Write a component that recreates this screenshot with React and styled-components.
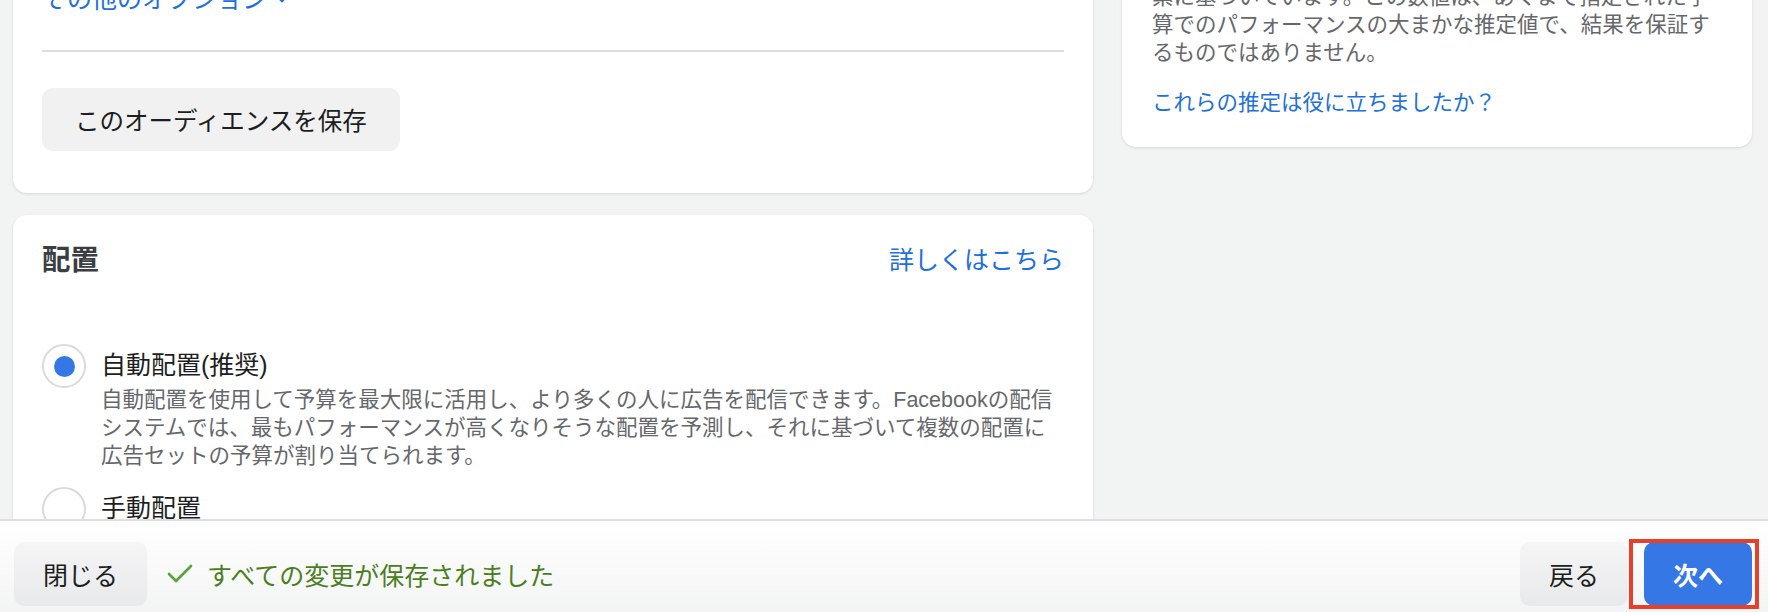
import styled, { createGlobalStyle } from "styled-components";

const GlobalStyle = createGlobalStyle`
  html, body {
    margin: 0;
    padding: 0;
  }
  body {
    background: #f2f3f3;
    font-family: "Liberation Sans", "Noto Sans CJK JP", sans-serif;
    color: #1c1e21;
    overflow: hidden;
  }
`;

const Page = styled.div`
  height: 612px;
  display: flex;
  flex-direction: column;
`;

const Main = styled.main`
  flex: 1;
  min-height: 0;
  overflow: hidden;
`;

// the view is scrolled: the top of both columns sits above the window
const Columns = styled.div`
  display: grid;
  grid-template-columns: 1080px 1fr;
  column-gap: 29px;
  align-items: start;
  padding: 0 16px 0 13px;
  margin-top: -46px;
`;

const Column = styled.div`
  display: flex;
  flex-direction: column;
  gap: 22px;
`;

const Card = styled.section`
  background: #fff;
  border-radius: 14px;
  box-shadow: 0 1px 3px rgba(0, 0, 0, 0.12);
  padding: ${(p) => p.$pad || "29px"};
`;

const MoreLink = styled.a`
  display: inline-flex;
  align-items: center;
  gap: 8px;
  font-size: 25px;
  line-height: 32px;
  color: #216fdb;
  text-decoration: none;
`;

const Divider = styled.hr`
  border: none;
  height: 2px;
  background: #dadde1;
  margin: 35px 0 36px;
`;

const SaveButton = styled.button`
  height: 63px;
  padding: 0 33px;
  border: none;
  border-radius: 11px;
  background: #f1f1f2;
  font-family: inherit;
  font-size: 24.5px;
  color: #1c1e21;
`;

const CardHeader = styled.div`
  display: flex;
  justify-content: space-between;
  align-items: center;
`;

const Heading = styled.h2`
  margin: 0;
  font-size: 28.5px;
  line-height: 36px;
  font-weight: 700;
  color: #3a3d41;
`;

const LearnLink = styled.a`
  font-size: 25px;
  line-height: 32px;
  color: #216fdb;
  text-decoration: none;
`;

const OptionList = styled.div`
  margin-top: 66px;
  display: flex;
  flex-direction: column;
  gap: 17px;
`;

const Option = styled.label`
  display: flex;
  align-items: flex-start;
  gap: 15px;
`;

const Radio = styled.span`
  flex: none;
  width: 44px;
  height: 44px;
  box-sizing: border-box;
  border-radius: 50%;
  border: 2px solid #d8dadd;
  background: #fff;
  display: flex;
  align-items: center;
  justify-content: center;

  &::after {
    content: "";
    width: 21px;
    height: 21px;
    border-radius: 50%;
    background: ${(p) => (p.$checked ? "#3578e5" : "transparent")};
  }
`;

const OptionText = styled.div`
  display: flex;
  flex-direction: column;
`;

const OptionLabel = styled.span`
  font-size: 25px;
  line-height: 42px;
  color: #1c1e21;
`;

const OptionDesc = styled.p`
  margin: 0;
  font-size: 21.5px;
  line-height: 28px;
  color: #65676b;
  white-space: nowrap;
`;

const EstimateText = styled.p`
  margin: 0;
  font-size: 21.5px;
  line-height: 28px;
  color: #65676b;
  white-space: nowrap;
`;

const HelpLink = styled.a`
  display: block;
  margin-top: 22px;
  font-size: 21.5px;
  line-height: 28px;
  color: #216fdb;
  text-decoration: none;
`;

const Footer = styled.footer`
  flex: none;
  height: 93px;
  box-sizing: border-box;
  border-top: 2px solid #dddfe2;
  background: linear-gradient(#ffffff, #f3f4f4);
  display: flex;
  justify-content: space-between;
  align-items: flex-start;
  padding: 21px 16px 0 14px;
`;

const FooterGroup = styled.div`
  display: flex;
  align-items: center;
  gap: ${(p) => p.$gap || "16px"};
`;

const FooterButton = styled.button`
  height: 64px;
  padding: 0 29px;
  border: none;
  border-radius: 10px;
  font-family: inherit;
  font-size: 25px;
  font-weight: ${(p) => (p.$primary ? 700 : 400)};
  color: ${(p) => (p.$primary ? "#fff" : "#1c1e21")};
  background: ${(p) =>
    p.$primary ? "#3578e5" : "linear-gradient(#f5f5f6, #e8e9ea)"};
`;

const Status = styled.div`
  display: flex;
  align-items: center;
  gap: 14px;
  font-size: 25px;
  color: #4b7e1f;
`;

// red annotation frame drawn over the "next" button
const Highlight = styled.span`
  position: relative;
  display: inline-flex;

  &::after {
    content: "";
    position: absolute;
    top: -3px;
    bottom: -3px;
    left: -15px;
    right: -7px;
    border: 4.5px solid #e6402b;
    pointer-events: none;
  }
`;

const Check = () => (
  <svg width="26" height="20" viewBox="0 0 26 20">
    <polyline
      points="2,10 9,17 24,2"
      fill="none"
      stroke="#5ba338"
      strokeWidth="2.6"
      strokeLinecap="round"
      strokeLinejoin="round"
    />
  </svg>
);

const Caret = () => (
  <svg width="14" height="10" viewBox="0 0 14 10">
    <path d="M2 2 L7 7 L12 2" fill="none" stroke="#216fdb" strokeWidth="2.4" />
  </svg>
);

export default function App() {
  return (
    <>
      <GlobalStyle />
      <Page>
        <Main>
          <Columns>
            <Column>
              <Card $pad="29px 29px 42px">
                <MoreLink href="#">
                  その他のオプション
                  <Caret />
                </MoreLink>
                <Divider />
                <SaveButton>このオーディエンスを保存</SaveButton>
              </Card>
              <Card $pad="27px 29px 60px">
                <CardHeader>
                  <Heading>配置</Heading>
                  <LearnLink href="#">詳しくはこちら</LearnLink>
                </CardHeader>
                <OptionList>
                  <Option>
                    <Radio $checked />
                    <OptionText>
                      <OptionLabel>自動配置(推奨)</OptionLabel>
                      <OptionDesc>
                        自動配置を使用して予算を最大限に活用し、より多くの人に広告を配信できます。Facebookの配信
                        <br />
                        システムでは、最もパフォーマンスが高くなりそうな配置を予測し、それに基づいて複数の配置に
                        <br />
                        広告セットの予算が割り当てられます。
                      </OptionDesc>
                    </OptionText>
                  </Option>
                  <Option>
                    <Radio />
                    <OptionText>
                      <OptionLabel>手動配置</OptionLabel>
                      <OptionDesc>
                        広告を表示する場所を手動で選択します。
                      </OptionDesc>
                    </OptionText>
                  </Option>
                </OptionList>
              </Card>
            </Column>
            <Column>
              <Card $pad="29px 30px 30px">
                <EstimateText>
                  素に基づいています。この数値は、あくまで指定された予
                  <br />
                  算でのパフォーマンスの大まかな推定値で、結果を保証す
                  <br />
                  るものではありません。
                </EstimateText>
                <HelpLink href="#">これらの推定は役に立ちましたか？</HelpLink>
              </Card>
            </Column>
          </Columns>
        </Main>
        <Footer>
          <FooterGroup $gap="20px">
            <FooterButton>閉じる</FooterButton>
            <Status>
              <Check />
              すべての変更が保存されました
            </Status>
          </FooterGroup>
          <FooterGroup>
            <FooterButton>戻る</FooterButton>
            <Highlight>
              <FooterButton $primary>次へ</FooterButton>
            </Highlight>
          </FooterGroup>
        </Footer>
      </Page>
    </>
  );
}
